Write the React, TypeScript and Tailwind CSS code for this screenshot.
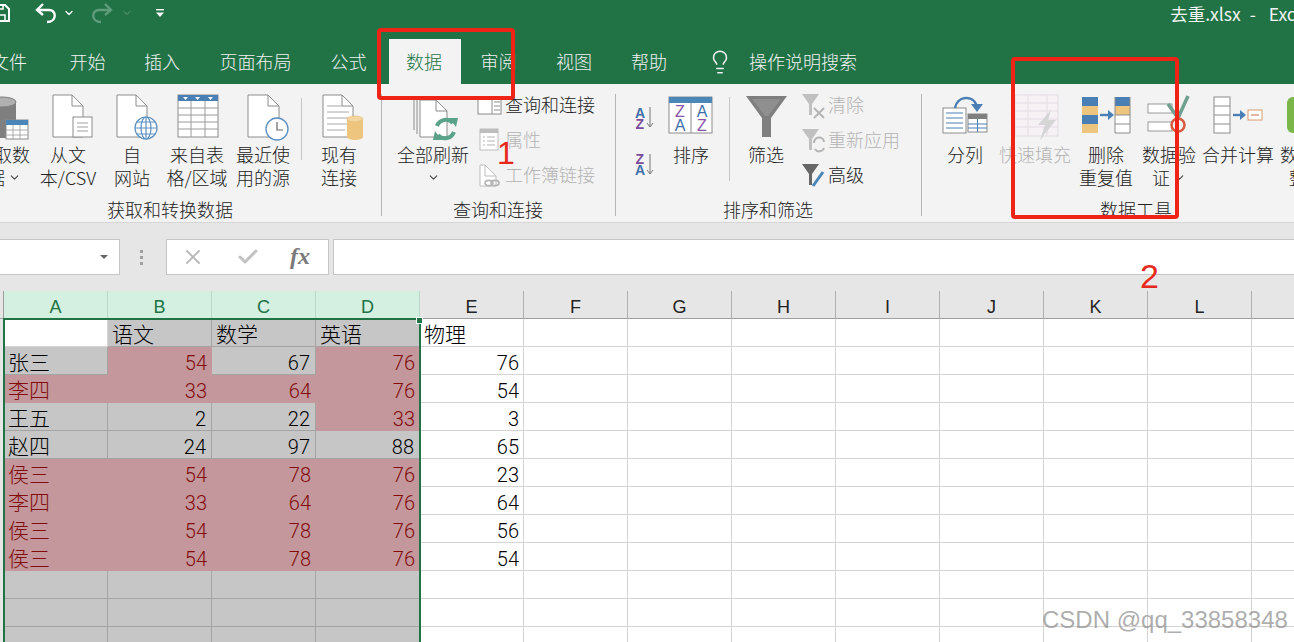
import { ReactNode } from 'react'
import { Check, ChevronDown, Lightbulb, X } from 'lucide-react'

const CJK = "font-['Noto_Sans_CJK_SC','Liberation_Sans',sans-serif]"

const TABS = [
  { label: '文件', w: 'w-[86px]' },
  { label: '开始', w: 'w-[71px]' },
  { label: '插入', w: 'w-[78px]' },
  { label: '页面布局', w: 'w-[109px]' },
  { label: '公式', w: 'w-[79px] pr-[2px]' },
  { label: '数据', w: 'w-[72px] pr-[2px]', active: true },
  { label: '审阅', w: 'w-[75px]' },
  { label: '视图', w: 'w-[76px]' },
  { label: '帮助', w: 'w-[74px]' },
]

const COLS = ['A', 'B', 'C', 'D', 'E', 'F', 'G', 'H', 'I', 'J', 'K', 'L', '']

// r = duplicate highlight, g = selected, w = outside the selection
type Cell = [string, 'r' | 'g' | 'w', 'l' | 'n']
const ROWS: Cell[][] = [
  [['', 'w', 'l'], ['语文', 'g', 'l'], ['数学', 'g', 'l'], ['英语', 'g', 'l'], ['物理', 'w', 'l']],
  [['张三', 'g', 'l'], ['54', 'r', 'n'], ['67', 'g', 'n'], ['76', 'r', 'n'], ['76', 'w', 'n']],
  [['李四', 'r', 'l'], ['33', 'r', 'n'], ['64', 'r', 'n'], ['76', 'r', 'n'], ['54', 'w', 'n']],
  [['王五', 'g', 'l'], ['2', 'g', 'n'], ['22', 'g', 'n'], ['33', 'r', 'n'], ['3', 'w', 'n']],
  [['赵四', 'g', 'l'], ['24', 'g', 'n'], ['97', 'g', 'n'], ['88', 'g', 'n'], ['65', 'w', 'n']],
  [['侯三', 'r', 'l'], ['54', 'r', 'n'], ['78', 'r', 'n'], ['76', 'r', 'n'], ['23', 'w', 'n']],
  [['李四', 'r', 'l'], ['33', 'r', 'n'], ['64', 'r', 'n'], ['76', 'r', 'n'], ['64', 'w', 'n']],
  [['侯三', 'r', 'l'], ['54', 'r', 'n'], ['78', 'r', 'n'], ['76', 'r', 'n'], ['56', 'w', 'n']],
  [['侯三', 'r', 'l'], ['54', 'r', 'n'], ['78', 'r', 'n'], ['76', 'r', 'n'], ['54', 'w', 'n']],
  [['', 'g', 'l'], ['', 'g', 'l'], ['', 'g', 'l'], ['', 'g', 'l'], ['', 'w', 'l']],
  [['', 'g', 'l'], ['', 'g', 'l'], ['', 'g', 'l'], ['', 'g', 'l'], ['', 'w', 'l']],
  [['', 'g', 'l'], ['', 'g', 'l'], ['', 'g', 'l'], ['', 'g', 'l'], ['', 'w', 'l']],
]

// icon drawn in page coordinates, so the numbers read straight off the screenshot
function Ico({ cx, w, children }: { cx: number; w: number; children: ReactNode }) {
  return (
    <svg width={w} height={50} viewBox={`${cx - w / 2} 94 ${w} 50`} className="overflow-visible shrink-0">
      {children}
    </svg>
  )
}

function SmallIco({ x, y, w, children }: { x: number; y: number; w: number; children: ReactNode }) {
  return (
    <svg width={w} height={35} viewBox={`${x} ${y} ${w} 35`} className="overflow-visible shrink-0">
      {children}
    </svg>
  )
}

function Page({ x, y = 95, w = 30, h = 42, stroke = '#8c8c8c' }: { x: number; y?: number; w?: number; h?: number; stroke?: string }) {
  return (
    <g fill="#fff" stroke={stroke} strokeWidth="1">
      <path d={`M${x} ${y} H${x + w - 11} L${x + w} ${y + 11} V${y + h} H${x} Z`} />
      <path d={`M${x + w - 11} ${y} V${y + 11} H${x + w}`} fill="none" />
    </g>
  )
}

function RibbonBtn({ w, icon, lines, muted, chevron, lastLine = '' }: { w: string; icon: ReactNode; lines: string[]; muted?: boolean; chevron?: boolean; lastLine?: string }) {
  return (
    <div className={`${w} shrink-0 mt-[6px] flex flex-col items-center`}>
      <div className="h-[50px] flex justify-center">{icon}</div>
      <div className={`-mt-[1px] flex flex-col items-center text-[18px] leading-[23px] whitespace-nowrap ${muted ? 'text-[#b4b4b4]' : 'text-[#222222]'}`}>
        {lines.map((l, i) => (
          <span key={i} className={`flex items-center gap-[3px] h-[23px] ${i === lines.length - 1 ? lastLine : ''}`}>
            {l}
            {chevron && i === lines.length - 1 && <ChevronDown size={13} strokeWidth={2} className="text-[#444444]" />}
          </span>
        ))}
      </div>
    </div>
  )
}

function SmallRow({ icon, label, muted }: { icon: ReactNode; label: string; muted?: boolean }) {
  return (
    <div className={`h-[35px] flex items-center text-[18px] whitespace-nowrap ${muted ? 'text-[#b4b4b4]' : 'text-[#222222]'}`}>
      {icon}
      <span className="mb-[2px]">{label}</span>
    </div>
  )
}

function Group({ w, label, labelClass, children, sep = true }: { w: string; label: string; labelClass: string; children: ReactNode; sep?: boolean }) {
  return (
    <div className={`${w} shrink-0 flex h-full`}>
      <div className="flex-1 min-w-0 flex flex-col">
        <div className="h-[110px] flex">{children}</div>
        <div className={`h-[24px] leading-[24px] -mt-[1px] text-[18px] text-[#222222] whitespace-nowrap ${labelClass}`}>{label}</div>
      </div>
      {sep && <div className="w-px bg-[#b5b5b5] mt-[6px] mb-[6px] shrink-0" />}
    </div>
  )
}

function GridCell({ cell }: { cell: Cell }) {
  const [text, kind, align] = cell
  const bg =
    kind === 'r'
      ? 'bg-[#c4979c] text-[#800c0c]'
      : kind === 'g'
        ? 'bg-[#c6c6c6] border-r border-b border-[#a4a4a4] text-black'
        : 'bg-white border-r border-b border-[#d4d4d4] text-black'
  const pad = kind === 'w' ? 'pr-[4px]' : 'pr-[5px]'
  return (
    <div
      className={`h-[28px] flex items-center ${bg} ${
        align === 'n'
          ? `justify-end pt-[4px] text-[20px] font-['Roboto','Liberation_Sans',sans-serif] font-light ${pad}`
          : 'pl-[4px] pt-[2px] text-[21px]'
      }`}
    >
      {text}
    </div>
  )
}

export default function App() {
  return (
    <div className={`relative w-[1294px] h-[642px] overflow-hidden bg-white ${CJK} font-light`}>
      {/* Title bar + tabs */}
      <div className="h-[84px] bg-[#217346] flex flex-col">
        <div className="h-[39px] flex items-start">
          <div className="h-[26px] flex items-center w-full">
            <svg width="20" height="20" viewBox="0 0 20 20" className="ml-[-10px] shrink-0" fill="none" stroke="#fff" strokeWidth="2">
              <path d="M2 2 H15 L19 6 V18 H2 Z" />
              <path d="M6 18 V12 H15 V18 M6 2 V6 H13 V2" strokeWidth="1.5" />
            </svg>
            <svg width="24" height="24" viewBox="0 0 24 24" className="ml-[24px] shrink-0" fill="none" stroke="#fff" strokeWidth="2.4">
              <path d="M9 3 L3 9 L9 14" />
              <path d="M3 9 H15 C23 9 23 21 13 21" />
            </svg>
            <ChevronDown size={12} strokeWidth={2.5} className="ml-[5px] text-white shrink-0" />
            <svg width="24" height="24" viewBox="0 0 24 24" className="ml-[15px] shrink-0" fill="none" stroke="#5f9c7b" strokeWidth="2.4">
              <path d="M15 3 L21 9 L15 14" />
              <path d="M21 9 H9 C1 9 1 21 11 21" />
            </svg>
            <ChevronDown size={12} strokeWidth={2} className="ml-[7px] text-[#5f9c7b] shrink-0" />
            <svg width="10" height="10" viewBox="0 0 10 10" className="ml-[22px] shrink-0" fill="#fff">
              <rect x="1" y="1" width="8" height="1.4" />
              <path d="M1 4.5 H9 L5 9 Z" />
            </svg>
            <div className="ml-auto mr-[-16px] mt-[2px] flex text-[17.5px] text-[#f4f4f4] whitespace-nowrap font-normal">
              <span>去重.xlsx</span>
              <span className="ml-[9px]">-</span>
              <span className="ml-[13px]">Excel</span>
            </div>
          </div>
        </div>
        <div className="h-[45px] flex ml-[-34px] text-[18px] text-[#f2f2f2]">
          {TABS.map(t => (
            <div
              key={t.label}
              className={`${t.w} shrink-0 flex items-center justify-center ${t.active ? 'bg-[#f3f3f3] text-[#217346]' : ''}`}
            >
              {t.label}
            </div>
          ))}
          <Lightbulb size={26} strokeWidth={1.4} className="ml-[21px] self-center shrink-0" />
          <span className="ml-[16px] self-center whitespace-nowrap">操作说明搜索</span>
        </div>
      </div>

      {/* Ribbon */}
      <div className="h-[138px] bg-[#f3f3f3] pt-[4px] flex ml-[-14px] w-[1400px]">
        <Group w="w-[396px]" label="获取和转换数据" labelClass="pl-[121px]">
          <RibbonBtn
            w="w-[52px]"
            chevron
            lastLine="mr-[16px]"
            lines={['取数', '据']}
            icon={
              <Ico cx={12} w={52}>
                <rect x="-12" y="102" width="28" height="36" fill="#7f7f7f" />
                <ellipse cx="2" cy="102" rx="14" ry="5" fill="#b0b0b0" stroke="#7f7f7f" />
                <rect x="6" y="120" width="22" height="19" fill="#fff" stroke="#8c8c8c" />
                <rect x="6" y="120" width="22" height="5" fill="#4a86b8" />
                <path d="M6 130 H28 M6 135 H28 M13 125 V139 M20 125 V139" stroke="#9a9a9a" strokeWidth="0.8" />
              </Ico>
            }
          />
          <RibbonBtn
            w="w-[60px]"
            lines={['从文', '本/CSV']}
            icon={
              <Ico cx={68} w={60}>
                <Page x={53} />
                <rect x="73" y="117" width="19" height="20" fill="#fff" stroke="#8c8c8c" />
                <path d="M77 123 H88 M77 127 H88 M77 131 H88" stroke="#a0a0a0" strokeWidth="1" />
              </Ico>
            }
          />
          <RibbonBtn
            w="w-[68px]"
            lines={['自', '网站']}
            icon={
              <Ico cx={132} w={68}>
                <Page x={117} />
                <g fill="#fff" stroke="#5a8fc0" strokeWidth="1.2">
                  <circle cx="146" cy="128" r="11" />
                  <ellipse cx="146" cy="128" rx="5" ry="11" />
                  <path d="M135 128 H157 M137 122 H155 M137 134 H155 M146 117 V139" fill="none" />
                </g>
              </Ico>
            }
          />
          <RibbonBtn
            w="w-[62px]"
            lines={['来自表', '格/区域']}
            icon={
              <Ico cx={197} w={62}>
                <rect x="178" y="95" width="40" height="42" fill="#fff" stroke="#8c8c8c" />
                <rect x="178" y="95" width="40" height="6" fill="#4a7fb5" />
                <path d="M183 97 h5 l-2.5 3 Z M195 97 h5 l-2.5 3 Z M208 97 h5 l-2.5 3 Z" fill="#fff" />
                <path d="M178 108 H218 M178 115 H218 M178 122 H218 M178 129 H218 M191 101 V137 M205 101 V137" stroke="#9a9a9a" strokeWidth="1" />
              </Ico>
            }
          />
          <RibbonBtn
            w="w-[70px]"
            lines={['最近使', '用的源']}
            icon={
              <Ico cx={263} w={70}>
                <Page x={248} w={31} />
                <circle cx="277" cy="129" r="11" fill="#fff" stroke="#5a8fc0" strokeWidth="1.3" />
                <path d="M277 122 V130 H283" fill="none" stroke="#666" strokeWidth="1.2" />
              </Ico>
            }
          />
          <div className="w-px h-[62px] bg-[#c6c6c6] mt-[10px] ml-[3px] mr-[2px] shrink-0" />
          <RibbonBtn
            w="w-[70px]"
            lines={['现有', '连接']}
            icon={
              <Ico cx={339} w={70}>
                <Page x={323} />
                <path d="M327 106 H342 M327 112 H349 M327 118 H349 M327 124 H349 M327 130 H345" stroke="#a8a8a8" strokeWidth="1" />
                <rect x="347" y="119" width="16" height="18" fill="#edc57f" />
                <ellipse cx="355" cy="119" rx="8" ry="3" fill="#f3d69f" stroke="#e0b76c" strokeWidth="0.6" />
                <ellipse cx="355" cy="137" rx="8" ry="3" fill="#edc57f" />
              </Ico>
            }
          />
        </Group>

        <Group w="w-[234px]" label="查询和连接" labelClass="pl-[71px]">
          <div className="ml-[16px]">
            <RibbonBtn
              w="w-[70px]"
              lines={['全部刷新', '']}
              chevron
              lastLine="ml-[1px]"
              icon={
                <Ico cx={433} w={70}>
                  <path d="M414 100 V130 M417 100 V134" stroke="#8c8c8c" strokeWidth="1" />
                  <Page x={420} y={100} w={27} h={37} />
                  <g fill="none" stroke="#5aa38a" strokeWidth="4">
                    <path d="M437 126 A9.5 9.5 0 0 1 453 123" />
                    <path d="M454 132 A9.5 9.5 0 0 1 438 135" />
                  </g>
                  <path d="M449 118 L458 118 L456 127 Z M442 140 L433 140 L435 131 Z" fill="#5aa38a" />
                </Ico>
              }
            />
          </div>
          <div className="ml-[10px] flex flex-col">
            <SmallRow
              label="查询和连接"
              icon={
                <SmallIco x={478} y={88} w={27}>
                  <rect x="478" y="98" width="23" height="16" fill="#fff" stroke="#8c8c8c" />
                  <path d="M492 98 V114 M494 102 H500 M494 106 H500 M494 110 H500" stroke="#8c8c8c" strokeWidth="1" />
                </SmallIco>
              }
            />
            <SmallRow
              muted
              label="属性"
              icon={
                <SmallIco x={478} y={123} w={27}>
                  <rect x="480" y="129" width="18" height="21" fill="#fff" stroke="#bdbdbd" />
                  <rect x="480" y="129" width="18" height="4" fill="#bdbdbd" />
                  <path d="M483 137 h2 M487 137 h8 M483 141 h2 M487 141 h8 M483 145 h2 M487 145 h8" stroke="#b4b4b4" strokeWidth="1" />
                </SmallIco>
              }
            />
            <SmallRow
              muted
              label="工作簿链接"
              icon={
                <SmallIco x={478} y={158} w={27}>
                  <Page x={480} y={165} w={16} h={21} stroke="#bdbdbd" />
                  <g fill="none" stroke="#b4b4b4" strokeWidth="1.6">
                    <ellipse cx="489" cy="183" rx="4" ry="2.6" />
                    <ellipse cx="495" cy="183" rx="4" ry="2.6" />
                  </g>
                </SmallIco>
              }
            />
          </div>
        </Group>

        <Group w="w-[306px]" label="排序和筛选" labelClass="pl-[107px]">
          <svg width="24" height="90" viewBox="632 94 24 90" className="ml-[16px] shrink-0 mt-[6px] font-['Liberation_Sans',sans-serif]">
            <text x="635" y="118" fontSize="14" fontWeight="700" fill="#3f6fa8">A</text>
            <text x="635.5" y="129" fontSize="14" fontWeight="700" fill="#7a4b9b">Z</text>
            <text x="635.5" y="164" fontSize="14" fontWeight="700" fill="#7a4b9b">Z</text>
            <text x="635" y="175" fontSize="14" fontWeight="700" fill="#3f6fa8">A</text>
            <path d="M650 107 V127 M647 123 L650 127 L653 123 M650 154 V174 M647 170 L650 174 L653 170" fill="none" stroke="#777" strokeWidth="1" />
          </svg>
          <RibbonBtn
            w="w-[70px]"
            lines={['排序']}
            icon={
              <Ico cx={691} w={70}>
                <rect x="669" y="97" width="43" height="36" fill="#fff" stroke="#8c8c8c" />
                <rect x="669" y="97" width="43" height="6" fill="#4a86b8" />
                <path d="M691 103 V133" stroke="#8c8c8c" strokeWidth="1" />
                <g fontSize="16" fontFamily="Liberation Sans, sans-serif" textAnchor="middle">
                  <text x="680" y="117" fill="#8a55a8">Z</text>
                  <text x="680" y="131" fill="#3f6fa8">A</text>
                  <text x="702" y="117" fill="#3f6fa8">A</text>
                  <text x="702" y="131" fill="#8a55a8">Z</text>
                </g>
              </Ico>
            }
          />
          <div className="w-px h-[84px] bg-[#c6c6c6] mt-[9px] ml-[3px] shrink-0" />
          <RibbonBtn
            w="w-[72px]"
            lines={['筛选']}
            icon={
              <Ico cx={766} w={72}>
                <path d="M746 96 H787 L771 118 V137 H762 V118 Z" fill="#7f7f7f" />
                <path d="M752 99 H781 L768 116 H765 Z" fill="#8f8f8f" />
              </Ico>
            }
          />
          <div className="flex flex-col">
            <SmallRow
              muted
              label="清除"
              icon={
                <SmallIco x={802} y={88} w={26}>
                  <path d="M802 94 H819 L812 104 V115 H809 V104 Z" fill="#c0c0c0" />
                  <path d="M814 108 L824 118 M824 108 L814 118" stroke="#b4b4b4" strokeWidth="2" />
                </SmallIco>
              }
            />
            <SmallRow
              muted
              label="重新应用"
              icon={
                <SmallIco x={802} y={123} w={26}>
                  <path d="M802 129 H819 L812 139 V150 H809 V139 Z" fill="#c0c0c0" />
                  <path d="M814 143 A5 5 0 0 1 824 142 M824 148 A5 5 0 0 1 815 149" fill="none" stroke="#b4b4b4" strokeWidth="2" />
                </SmallIco>
              }
            />
            <SmallRow
              label="高级"
              icon={
                <SmallIco x={802} y={158} w={26}>
                  <path d="M802 164 H819 L812 174 V185 H809 V174 Z" fill="#666" />
                  <path d="M813 186 L823 172" stroke="#4a86b8" strokeWidth="3" />
                </SmallIco>
              }
            />
          </div>
        </Group>

        <Group w="w-[480px]" label="数据工具" labelClass="pl-[178px]" sep={false}>
          <div className="w-[13px] shrink-0" />
          <RibbonBtn
            w="w-[60px]"
            lines={['分列']}
            icon={
              <Ico cx={965} w={60}>
                <rect x="943" y="108" width="23" height="25" fill="#fff" stroke="#8c8c8c" />
                <path d="M946 113 H963 M946 118 H963 M946 123 H963 M946 128 H963" stroke="#4a7fb5" strokeWidth="1" />
                <rect x="968" y="114" width="19" height="18" fill="#fff" stroke="#8c8c8c" />
                <rect x="968" y="114" width="19" height="5" fill="#7f7f7f" />
                <path d="M977.5 119 V132 M968 124 H987 M968 128 H987" stroke="#4a7fb5" strokeWidth="1" />
                <path d="M955 108 C957 96 973 94 977 106" fill="none" stroke="#4a7fb5" strokeWidth="2.6" />
                <path d="M971 104 H983 L977 112 Z" fill="#4a7fb5" />
              </Ico>
            }
          />
          <RibbonBtn
            w="w-[80px]"
            muted
            lines={['快速填充']}
            icon={
              <Ico cx={1035} w={80}>
                <rect x="1015" y="95" width="43" height="41" fill="#f5f1f5" stroke="#e2dce2" />
                <path d="M1015 103 H1058 M1015 111 H1058 M1015 119 H1058 M1015 127 H1058 M1028 95 V136 M1047 95 V136" stroke="#e6dee6" strokeWidth="1" />
                <path d="M1051 110 L1038 125 H1045 L1040 140 L1056 120 H1048 Z" fill="#d5d5d5" />
              </Ico>
            }
          />
          <RibbonBtn
            w="w-[62px]"
            lines={['删除', '重复值']}
            icon={
              <Ico cx={1106} w={62}>
                <rect x="1082" y="97" width="16" height="9" fill="#4a7fb5" />
                <rect x="1082" y="106" width="16" height="9" fill="#edc57f" />
                <rect x="1082" y="115" width="16" height="9" fill="#4a7fb5" />
                <rect x="1082" y="124" width="16" height="9" fill="#edc57f" />
                <path d="M1100 115 H1109" stroke="#4a7fb5" strokeWidth="2.4" />
                <path d="M1108 110 L1114 115 L1108 120 Z" fill="#4a7fb5" />
                <rect x="1115" y="97" width="15" height="9" fill="#4a7fb5" />
                <rect x="1115" y="106" width="15" height="9" fill="#edc57f" />
                <rect x="1115" y="115" width="15" height="18" fill="#fff" />
                <path d="M1115 97 V133 H1130 V97 M1115 115 H1130 M1115 124 H1130" fill="none" stroke="#8c8c8c" strokeWidth="1" />
              </Ico>
            }
          />
          <RibbonBtn
            w="w-[64px]"
            chevron
            lines={['数据验', '证']}
            icon={
              <Ico cx={1169} w={64}>
                <rect x="1148" y="104" width="24" height="9" fill="#fff" stroke="#9a9a9a" />
                <rect x="1148" y="122" width="24" height="9" fill="#fff" stroke="#9a9a9a" />
                <path d="M1168 104 L1178 118 L1188 96" fill="none" stroke="#6f9f8f" strokeWidth="3.5" />
                <circle cx="1178" cy="125" r="6.5" fill="none" stroke="#d9593f" strokeWidth="2.5" />
                <path d="M1178 118 V132" stroke="#d9593f" strokeWidth="2" />
              </Ico>
            }
          />
          <RibbonBtn
            w="w-[74px]"
            lines={['合并计算']}
            icon={
              <Ico cx={1238} w={74}>
                <rect x="1214" y="97" width="16" height="36" fill="#fff" stroke="#8c8c8c" />
                <path d="M1214 106 H1230 M1214 115 H1230 M1214 124 H1230" stroke="#8c8c8c" strokeWidth="1" />
                <path d="M1233 115 H1241" stroke="#4a7fb5" strokeWidth="2.4" />
                <path d="M1240 110 L1246 115 L1240 120 Z" fill="#4a7fb5" />
                <rect x="1248" y="110" width="14" height="10" fill="#fff" stroke="#d99a6c" />
                <path d="M1251 115 H1259" stroke="#c9684f" strokeWidth="1" />
              </Ico>
            }
          />
          <RibbonBtn
            w="w-[46px]"
            lines={['数据', '整']}
            icon={
              <Ico cx={1298} w={46}>
                <rect x="1287" y="97" width="30" height="36" rx="6" fill="#7ab648" />
              </Ico>
            }
          />
        </Group>
      </div>

      {/* Formula bar */}
      <div className="h-[69px] bg-[#e6e6e6] border-t border-[#d6d6d6] pt-[16px] flex items-start">
        <div className="w-[120px] h-[36px] bg-white border-y border-r border-[#c6c6c6] flex items-center justify-end pr-[11px] shrink-0">
          <div className="w-0 h-0 border-x-[4px] border-x-transparent border-t-[4px] border-t-[#666666]" />
        </div>
        <div className="w-[42px] mr-[4px] h-[36px] flex flex-col items-center justify-center gap-[3px] shrink-0">
          <span className="w-[3px] h-[3px] bg-[#a0a0a0]" />
          <span className="w-[3px] h-[3px] bg-[#a0a0a0]" />
          <span className="w-[3px] h-[3px] bg-[#a0a0a0]" />
        </div>
        <div className="w-[163px] h-[36px] bg-white border border-[#c6c6c6] flex items-center shrink-0">
          <X size={24} strokeWidth={1.8} className="ml-[14px] text-[#b8b8b8]" />
          <Check size={24} strokeWidth={3} className="ml-[31px] text-[#c2c2c2]" />
          <span className="ml-[30px] mb-[3px] text-[24px] italic font-bold text-[#7a7a7a] font-['Liberation_Serif',serif]">fx</span>
        </div>
        <div className="ml-[4px] flex-1 h-[36px] bg-white border-y border-l border-[#c6c6c6]" />
      </div>

      {/* Sheet */}
      <div className="relative">
        <div className="grid grid-cols-[4px_repeat(13,104px)]">
          <div className="h-[28px] bg-[#e6e6e6] border-b border-[#9e9e9e] border-r" />
          {COLS.map((c, i) => (
            <div
              key={i}
              className={`h-[28px] pt-[5px] flex items-center justify-center text-[18px] border-r border-b font-['Liberation_Sans',sans-serif] font-normal ${
                i < 4 ? 'bg-[#d3f0e0] text-[#217346] border-r-[#bcd8c8] border-b-[#217346]' : 'bg-[#e6e6e6] text-[#222222] border-r-[#b0b0b0] border-b-[#9e9e9e]'
              }`}
            >
              {c}
            </div>
          ))}
          {ROWS.map((row, r) => (
            <div key={r} className="contents">
              <div className="h-[28px] bg-[#e6e6e6]" />
              {row.map((cell, c) => (
                <GridCell key={c} cell={cell} />
              ))}
              {COLS.slice(5).map((_, c) => (
                <div key={c} className="h-[28px] bg-white border-r border-b border-[#d4d4d4]" />
              ))}
            </div>
          ))}
        </div>
        {/* selection frame */}
        <div className="absolute left-[3px] top-[27px] w-[418px] h-[400px] border-2 border-[#217346]" />
        <div className="absolute left-[416px] top-[26px] w-[7px] h-[7px] bg-[#217346] border border-white" />
      </div>

      {/* Annotations pasted over the screenshot */}
      <div className="absolute left-[377px] top-[28px] w-[138px] h-[72px] border-[4px] border-[#f02416] rounded-[4px]" />
      <div className="absolute left-[1011px] top-[57px] w-[168px] h-[162px] border-[4px] border-[#f02416] rounded-[4px]" />
      <span className="absolute left-[497px] top-[133px] text-[32px] leading-[40px] text-[#e8281c] font-['Liberation_Sans',sans-serif]">1</span>
      <span className="absolute left-[1140px] top-[256px] text-[34px] leading-[40px] text-[#e8281c] font-['Liberation_Sans',sans-serif]">2</span>
      <span className="absolute left-[1042px] top-[604px] text-[24px] leading-[32px] text-[#8a8a8a]/70 whitespace-nowrap font-['Liberation_Sans',sans-serif]">
        CSDN @qq_33858348
      </span>
    </div>
  )
}
